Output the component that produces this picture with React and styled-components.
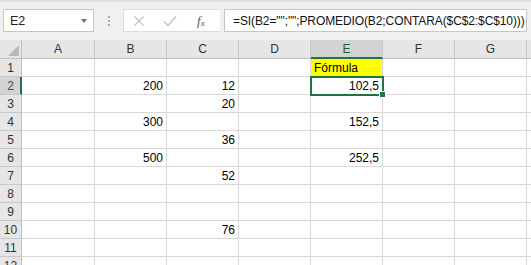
import { Fragment } from "react";
import styled, { createGlobalStyle } from "styled-components";

const GlobalStyle = createGlobalStyle`
  html, body {
    margin: 0;
    padding: 0;
    background: #ffffff;
    overflow: hidden;
  }
  body {
    font-family: "Liberation Sans", Arial, sans-serif;
  }
`;

const Window = styled.div`
  width: 531px;
  height: 265px;
  overflow: hidden;
  background: #fff;
`;

const FormulaBar = styled.div`
  height: 40px;
  box-sizing: border-box;
  background: #f0f0f0;
  border-top: 2px solid #e0e0e0;
  padding: 7px 4px 0 3px;
  display: flex;
  align-items: flex-start;
`;

const NameBox = styled.div`
  width: 91px;
  height: 23px;
  box-sizing: border-box;
  background: #fff;
  border: 1px solid #c6c6c6;
  display: flex;
  align-items: center;
  justify-content: space-between;
  padding: 0 6px 0 6px;
  font-size: 12.5px;
  color: #222;
`;

const Caret = styled.span`
  width: 0;
  height: 0;
  border-left: 3.5px solid transparent;
  border-right: 3.5px solid transparent;
  border-top: 4px solid #707070;
`;

const Grip = styled.div`
  width: 29px;
  height: 23px;
  display: flex;
  flex-direction: column;
  align-items: center;
  justify-content: center;
  gap: 2px;
  span {
    width: 2px;
    height: 2px;
    background: #a6a6a6;
  }
`;

const ButtonBox = styled.div`
  width: 97px;
  height: 23px;
  box-sizing: border-box;
  background: #fff;
  border: 1px solid #dcdcdc;
  border-right: none;
  display: flex;
  align-items: center;
  padding-left: 9px;
  gap: 18px;
`;

const Fx = styled.span`
  font-family: "Liberation Serif", "Times New Roman", serif;
  font-style: italic;
  font-size: 13px;
  color: #555;
  margin-left: 2px;
  sub {
    font-size: 9px;
    vertical-align: -1px;
  }
`;

const Input = styled.div`
  flex: 1;
  height: 23px;
  box-sizing: border-box;
  margin-left: 4px;
  background: #fff;
  border: 1px solid #c6c6c6;
  display: flex;
  align-items: center;
  padding-left: 8px;
  font-size: 12px;
  letter-spacing: -0.1px;
  color: #111;
  white-space: nowrap;
`;

const Sheet = styled.div`
  display: grid;
  grid-template-columns: 22px 73px repeat(6, 72px) 1fr;
  grid-auto-rows: 18px;
  grid-template-rows: 19px;
`;

const Corner = styled.div`
  background: #e6e6e6;
  border-right: 1px solid #bdbdbd;
  border-bottom: 1px solid #bdbdbd;
  box-sizing: border-box;
  display: flex;
  align-items: flex-end;
  justify-content: flex-end;
  padding: 0 2px 2px 0;
  &::after {
    content: "";
    width: 0;
    height: 0;
    border-left: 11px solid transparent;
    border-bottom: 11px solid #b8b8b8;
  }
`;

const ColHead = styled.div`
  background: ${(p) => (p.$active ? "#d3d3d3" : "#e6e6e6")};
  box-sizing: border-box;
  border-right: 1px solid #c8c8c8;
  border-bottom: ${(p) => (p.$active ? "2px solid #217346" : "1px solid #bdbdbd")};
  display: flex;
  align-items: center;
  justify-content: center;
  font-size: 12px;
  color: ${(p) => (p.$active ? "#1d5e39" : "#333")};
  padding-top: ${(p) => (p.$active ? "1px" : "0")};
`;

const RowHead = styled.div`
  background: ${(p) => (p.$active ? "#d3d3d3" : "#e6e6e6")};
  box-sizing: border-box;
  border-right: ${(p) => (p.$active ? "2px solid #217346" : "1px solid #bdbdbd")};
  border-bottom: 1px solid #c8c8c8;
  display: flex;
  align-items: center;
  justify-content: center;
  font-size: 12px;
  color: ${(p) => (p.$active ? "#1d5e39" : "#333")};
  padding-left: ${(p) => (p.$active ? "1px" : "0")};
`;

const Cell = styled.div`
  position: relative;
  box-sizing: border-box;
  border-right: 1px solid #d9d9d9;
  border-bottom: 1px solid #d9d9d9;
  background: ${(p) => (p.$fill ? p.$fill : "#fff")};
  display: flex;
  align-items: flex-end;
  justify-content: ${(p) => (p.$num ? "flex-end" : "flex-start")};
  padding: 0 3px 1px 3px;
  font-size: 12px;
  color: #000;
  white-space: nowrap;
  ${(p) =>
    p.$selected &&
    `
    z-index: 1;
    outline: 2px solid #217346;
    outline-offset: -1px;
    &::after {
      content: "";
      position: absolute;
      right: -4px;
      bottom: -4px;
      width: 5px;
      height: 5px;
      background: #217346;
      border: 1px solid #fff;
    }
  `}
`;

const columns = ["A", "B", "C", "D", "E", "F", "G", ""];

const data = {
  1: { E: "Fórmula" },
  2: { B: "200", C: "12", E: "102,5" },
  3: { C: "20" },
  4: { B: "300", E: "152,5" },
  5: { C: "36" },
  6: { B: "500", E: "252,5" },
  7: { C: "52" },
  10: { C: "76" },
};

const rows = [1, 2, 3, 4, 5, 6, 7, 8, 9, 10, 11, 12];

const App = () => {
  return (
    <Window>
      <GlobalStyle />
      <FormulaBar>
        <NameBox>
          E2
          <Caret />
        </NameBox>
        <Grip>
          <span />
          <span />
          <span />
        </Grip>
        <ButtonBox>
          <svg width="12" height="12" viewBox="0 0 12 12">
            <path d="M1.5 1.5 L10.5 10.5 M10.5 1.5 L1.5 10.5" stroke="#c4c4c4" strokeWidth="1.3" fill="none" />
          </svg>
          <svg width="14" height="12" viewBox="0 0 14 12">
            <path d="M1 6.5 L5 10.5 L13 1.5" stroke="#c4c4c4" strokeWidth="1.5" fill="none" />
          </svg>
          <Fx>
            f<sub>x</sub>
          </Fx>
        </ButtonBox>
        <Input>=SI(B2="";"";PROMEDIO(B2;CONTARA($C$2:$C$10)))</Input>
      </FormulaBar>
      <Sheet>
        <Corner />
        {columns.map((c, i) => (
          <ColHead key={i} $active={c === "E"}>
            {c}
          </ColHead>
        ))}
        {rows.map((r) => (
          <Fragment key={r}>
            <RowHead $active={r === 2}>{r}</RowHead>
            {columns.map((c, i) => {
              const v = data[r] && data[r][c];
              const isTitle = r === 1 && c === "E";
              return (
                <Cell
                  key={i}
                  $num={v && !isTitle}
                  $fill={isTitle ? "#ffff00" : null}
                  $selected={r === 2 && c === "E"}
                >
                  {v}
                </Cell>
              );
            })}
          </Fragment>
        ))}
      </Sheet>
    </Window>
  );
};

export default App;
